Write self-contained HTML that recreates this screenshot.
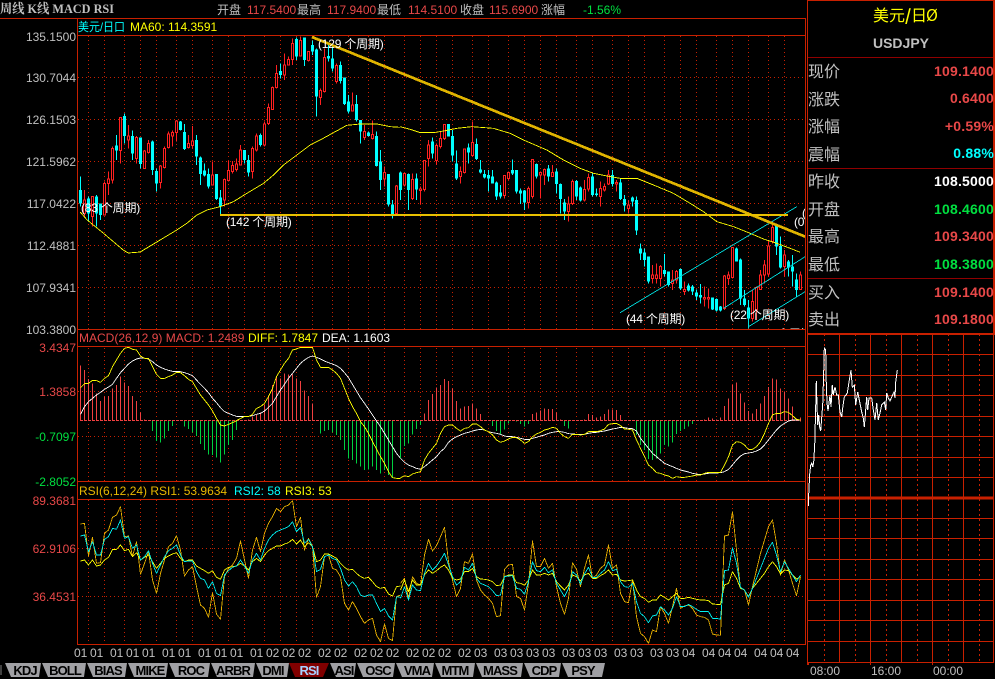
<!DOCTYPE html>
<html><head><meta charset="utf-8"><title>USDJPY</title>
<style>
html,body{margin:0;padding:0;background:#000;overflow:hidden;width:995px;height:679px}
svg{display:block;font-family:"Liberation Sans","WenQuanYi Zen Hei","Noto Sans CJK SC",sans-serif;font-size:12px}
.g{fill:#c0c0c0}.r{fill:#e84848}.n{fill:#00e040}.w{fill:#fff}.y{fill:#ffff00}.c{fill:#00ffff}.o{fill:#e8b800}
.num text,.num{font-weight:bold;font-size:14px;letter-spacing:.2px}
.lab{font-size:16px;fill:#c0c0c0;font-family:"WenQuanYi Zen Hei","Noto Sans CJK SC",sans-serif}
.tab{font-weight:bold;font-size:13px;letter-spacing:-.9px;text-anchor:middle;fill:#000}
.ln{fill:none;stroke-width:2.6;stroke-linejoin:round}
.ann{letter-spacing:-.2px}
</style></head><body>
<svg width="995" height="679" viewBox="0 0 995 679" xmlns="http://www.w3.org/2000/svg">
<rect width="995" height="679" fill="#000"/>

<g shape-rendering="crispEdges">
<!-- grid verticals -->
<path fill="none" stroke="#c82000" stroke-dasharray="1 3" d="M88.5 36V644M104.5 36V644M124.5 36V644M140.5 36V644M156.5 36V644M176.5 36V644M192.5 36V644M212.5 36V644M228.5 36V644M244.5 36V644M264.5 36V644M280.5 36V644M296.5 36V644M312.5 36V644M332.5 36V644M348.5 36V644M368.5 36V644M384.5 36V644M404.5 36V644M420.5 36V644M436.5 36V644M452.5 36V644M472.5 36V644M488.5 36V644M508.5 36V644M524.5 36V644M540.5 36V644M556.5 36V644M576.5 36V644M592.5 36V644M612.5 36V644M628.5 36V644M644.5 36V644M664.5 36V644M680.5 36V644M696.5 36V644M716.5 36V644M732.5 36V644M748.5 36V644M768.5 36V644M784.5 36V644"/>
<!-- grid horizontals -->
<path fill="none" stroke="#c82000" stroke-dasharray="1 3" d="M78 77.5H805M78 119.5H805M78 161.5H805M78 203.5H805M78 245.5H805M78 287.5H805M78 391.5H805M78 436.5H805M78 548.5H805M78 596.5H805"/>

<!-- candles part 1 -->
<g transform="translate(.17 0) scale(.33333)">
<path fill="none" stroke="#00ffff" stroke-width="3" d="M241 530V620M265 590V665M289 585V680M301 610V660M349 405V480M373 340V430M397 392V480M421 412V505M457 422V525M469 505V575M541 363V392M553 372V450M589 405V495M601 470V555M613 490V530M625 505V565M649 522V600M661 570V645M733 450V490M745 465V530M781 400V440M841 190V235M889 112V180M913 112V198M937 122V165M949 145V350M985 130V185M997 130V215M1021 185V250M1033 232V315M1045 285V340M1069 285V365M1081 360V430M1105 395V410M1129 395V500M1141 450V570M1165 522V620M1177 600V655"/>
<path fill="none" stroke="#00ffff" stroke-width="9" d="M241 570V610M265 595V640M289 590V640M301 610V645M349 437V452M373 348V408M397 408V460M421 412V492M457 425V510M469 513V550M541 365V390M553 396V447M589 420V470M601 472V522M613 512V527M625 522V560M649 522V597M661 593V620M733 450V480M745 480V518M781 405V435M841 213V225M889 117V170M913 112V180M937 135V155M949 148V290M985 168V175M997 175V205M1021 195V243M1033 232V312M1045 305V335M1069 312V360M1081 360V395M1105 398V408M1129 408V498M1141 485V540M1165 522V613M1177 613V645"/>
<path fill="none" stroke="#ff2020" stroke-width="3" d="M253 570V650M277 590V680M313 545V645M325 515V585M337 440V550M361 352V490M385 375V445M409 408V490M433 450V505M445 420V460M481 495V565M493 440V505M505 395V445M517 392V440M529 360V425M565 405V445M577 378V445M637 485V555M673 535V620M685 483V545M697 483V520M709 475V515M721 435V495M757 440V535M769 400V455M793 365V440M805 310V375M817 260V330M829 195V265M853 160V240M865 170V195M877 115V195M901 110V170M925 155V185M961 265V315M973 145V278M1009 190V250M1057 278V335M1093 375V420M1117 362V418M1153 500V560M1189 555V640"/>
<path fill="#000" stroke="#ff2020" stroke-width="3" d="M250 600h6V640h-6zM274 590h6V650h-6zM310 550h6V645h-6zM322 537h6V550h-6zM334 445h6V540h-6zM358 352h6V452h-6zM382 408h6V420h-6zM406 413h6V475h-6zM430 453h6V505h-6zM442 430h6V458h-6zM478 498h6V548h-6zM490 445h6V502h-6zM502 402h6V442h-6zM514 397h6V408h-6zM526 363h6V398h-6zM562 430h6V443h-6zM574 423h6V437h-6zM634 525h6V555h-6zM670 538h6V600h-6zM682 512h6V542h-6zM694 497h6V515h-6zM706 492h6V508h-6zM718 450h6V495h-6zM754 445h6V515h-6zM766 408h6V450h-6zM790 372h6V435h-6zM802 322h6V370h-6zM814 262h6V328h-6zM826 220h6V262h-6zM850 195h6V225h-6zM862 178h6V195h-6zM874 130h6V178h-6zM898 122h6V168h-6zM922 155h6V182h-6zM958 272h6V293h-6zM970 172h6V275h-6zM1006 197h6V245h-6zM1054 315h6V333h-6zM1090 395h6V412h-6zM1114 403h6V415h-6zM1150 518h6V537h-6zM1186 558h6V640h-6z"/>
</g>

<!-- candles part 2 -->
<g transform="translate(400.17 0) scale(.33333)">
<path fill="none" stroke="#00ffff" stroke-width="3" d="M1 515V600M25 520V630M49 520V600M97 412V475M145 372V410M157 390V485M169 452V540M205 430V490M229 415V480M241 480V520M253 510V535M265 510V575M277 510V550M289 545V600M301 555V595M337 478V525M349 510V580M361 565V612M373 570V630M409 490V535M445 495V545M469 505V580M481 550V640M493 597V660M529 540V600M541 560V605M577 520V590M589 565V590M637 510V560M661 535V600M673 585V635M697 590V620M709 590V705M721 730V780M733 745V800M745 770V850M793 762V830M805 815V860M841 805V870M865 850V875M877 855V885M889 868V900M901 852V910M937 893V930M949 895V935M961 918V935M1009 742V785M1021 775V915M1033 870V920M1045 900V985M1129 675V765M1141 710V805M1165 780V830M1177 765V860M1189 820V890"/>
<path fill="none" stroke="#00ffff" stroke-width="9" d="M1 517V570M25 522V570M49 535V568M97 425V460M145 372V410M157 408V467M169 490V535M205 443V457M229 432V477M241 508V517M253 522V533M265 525V535M277 530V550M289 547V590M301 578V590M337 510V520M349 510V575M361 572V580M373 572V608M409 492V530M445 505V530M469 515V552M481 552V597M493 607V635M529 543V590M541 562V602M577 530V585M589 580V585M637 525V552M661 548V597M673 597V617M697 592V605M709 600V692M721 745V760M733 757V780M745 770V845M793 810V822M805 815V855M841 807V865M865 857V872M877 860V875M889 877V890M901 885V893M937 893V928M949 897V932M961 920V932M1009 745V785M1021 778V895M1033 895V915M1045 922V955M1129 675V740M1141 738V803M1165 785V803M1177 800V815M1189 838V870"/>
<path fill="none" stroke="#ff2020" stroke-width="3" d="M13 520V560M37 520V600M61 560V612M73 480V575M85 420V500M109 430V495M121 395V445M133 372V420M181 500V550M193 445V520M217 365V470M313 525V595M325 515V540M385 560V625M397 478V595M421 515V595M433 505V555M457 495V530M505 590V665M517 538V615M553 540V605M565 520V575M601 545V620M613 550V575M625 510V555M649 540V575M685 600V640M757 795V850M769 790V850M781 795V860M817 810V870M829 810V850M853 845V885M913 860V920M925 865V925M973 825V930M985 815V855M997 742V835M1057 870V965M1069 860V960M1081 810V868M1093 780V850M1105 720V830M1117 665V730M1153 750V830M1201 815V870"/>
<path fill="#000" stroke="#ff2020" stroke-width="3" d="M10 520h6V555h-6zM34 538h6V595h-6zM58 567h6V572h-6zM70 482h6V568h-6zM82 435h6V475h-6zM106 436h6V482h-6zM118 415h6V440h-6zM130 373h6V415h-6zM178 515h6V530h-6zM190 447h6V517h-6zM214 428h6V467h-6zM310 527h6V587h-6zM322 518h6V535h-6zM382 565h6V607h-6zM394 478h6V590h-6zM418 518h6V525h-6zM430 508h6V525h-6zM454 517h6V530h-6zM502 612h6V635h-6zM514 545h6V610h-6zM550 568h6V600h-6zM562 533h6V567h-6zM598 565h6V590h-6zM610 560h6V570h-6zM622 525h6V552h-6zM646 548h6V552h-6zM682 615h6V625h-6zM754 825h6V835h-6zM766 825h6V835h-6zM778 800h6V835h-6zM814 840h6V850h-6zM826 815h6V840h-6zM850 868h6V875h-6zM910 892h6V897h-6zM922 892h6V897h-6zM970 828h6V925h-6zM982 825h6V835h-6zM994 743h6V832h-6zM1054 905h6V955h-6zM1066 862h6V930h-6zM1078 825h6V868h-6zM1090 795h6V825h-6zM1102 738h6V822h-6zM1114 683h6V725h-6zM1150 765h6V800h-6zM1198 825h6V868h-6z"/>
</g>

<!-- MA60 -->
<g transform="translate(.17 0) scale(.33333)">
<polyline class="ln" stroke="#ffff00" points="240 636 261 660 309 699 369 750 384 759 420 756 480 720 530 690 560 670 590 645 620 630 660 620 700 605 740 580 790 550 820 525 850 495 890 465 930 435 960 420 1000 398 1040 376 1080 372 1130 372 1170 380 1200 382"/>
</g>
<g transform="translate(400.17 0) scale(.33333)">
<polyline class="ln" stroke="#ffff00" points="0 380 30 388 60 398 100 398 130 393 170 385 215 380 280 385 330 400 370 420 440 450 490 480 540 505 580 520 620 528 660 535 710 535 760 555 820 580 870 610 910 635 950 665 1000 680 1050 700 1090 717 1130 730 1170 745 1200 757"/>
<!-- channel lines -->
<path fill="none" stroke="#00e0e0" stroke-width="2.6" d="M660 938L1190 620M970 925L1215 770M1045 980L1215 875M1045 930V985"/>
</g>
<!-- gold trend lines -->
<path fill="none" stroke="#e0b400" stroke-width="2.7" d="M312 37L806 237"/>
<path fill="none" stroke="#e8c000" stroke-width="2" shape-rendering="crispEdges" d="M220 215H788"/>

<!-- MACD bars -->
<g transform="translate(.17 325) scale(.33333)" fill="none" stroke-width="3">
<path stroke="#f04040" d="M241 287V122M253 287V135M265 287V162M277 287V175M289 287V205M301 287V228M313 287V215M325 287V213M337 287V190M349 287V180M361 287V155M373 287V172M385 287V183M397 287V213M409 287V228M421 287V262M433 287V283M445 287V285M733 287V285M745 287V283M757 287V275M769 287V270M781 287V262M793 287V240M805 287V212M817 287V180M829 287V158M841 287V160M853 287V145M865 287V148M877 287V148M889 287V160M901 287V168M913 287V197M925 287V213M937 287V235"/>
<path stroke="#00d040" d="M457 287V318M469 287V348M481 287V353M493 287V340M505 287V318M517 287V303M553 287V305M565 287V312M577 287V322M589 287V333M601 287V357M613 287V375M625 287V388M637 287V390M649 287V397M661 287V412M673 287V388M685 287V360M697 287V345M709 287V315M961 287V325M973 287V318M985 287V315M997 287V322M1009 287V330M1021 287V345M1033 287V375M1045 287V400M1057 287V405M1069 287V415M1081 287V425M1093 287V435M1105 287V433M1117 287V425M1129 287V435M1141 287V445M1153 287V435M1165 287V450M1177 287V458"/>
<path stroke="#f04040" d="M240 287H1200" stroke-dasharray="9 3"/>
<polyline class="ln" stroke="#fff" points="241 268 253 245 265 230 277 220 289 210 301 202 313 193 325 186 337 178 349 160 361 143 373 130 385 117 397 108 409 102 421 99 433 100 445 102 457 110 469 120 481 127 493 132 505 136 517 139 529 139 541 140 553 143 565 147 577 152 589 165 601 178 613 190 625 203 637 220 649 233 661 248 673 260 685 265 697 270 709 274 721 274 733 274 745 274 757 272 769 268 781 265 793 258 805 247 817 235 829 215 841 195 853 178 865 160 877 145 889 130 901 115 913 105 925 97 937 93 949 97 961 102 973 108 985 113 997 117 1009 122 1021 130 1033 143 1045 158 1057 178 1069 198 1081 218 1093 235 1105 252 1117 270 1129 288 1141 305 1153 325 1165 345 1177 365 1189 385 1201 400"/>
<polyline class="ln" stroke="#ffff00" points="241 188 253 176 265 175 277 166 289 167 301 172 313 160 325 152 337 125 349 105 361 85 373 70 385 67 397 73 409 75 421 93 433 100 445 100 457 125 469 148 481 160 493 160 505 155 517 150 529 142 541 143 553 152 565 163 577 170 589 190 601 210 613 225 625 240 637 258 649 280 661 300 673 303 685 298 697 293 709 287 721 280 733 275 745 275 757 268 769 250 781 245 793 235 805 215 817 190 829 155 841 135 853 115 865 100 877 75 889 72 901 67 913 67 925 67 937 67 949 105 961 127 973 127 985 127 997 135 1009 145 1021 160 1033 190 1045 220 1057 245 1069 265 1081 290 1093 305 1105 325 1117 350 1129 372 1141 395 1153 415 1165 440 1177 458 1189 460 1201 460"/>
</g>
<g transform="translate(400.17 325) scale(.33333)" fill="none" stroke-width="3">
<path stroke="#00d040" d="M1 287V400M13 287V363M25 287V355M37 287V328M49 287V312M61 287V300M277 287V303M289 287V318M301 287V328M313 287V313M325 287V295M349 287V290M361 287V297M373 287V305M385 287V297M493 287V303M505 287V310M709 287V330M721 287V360M733 287V375M745 287V402M757 287V405M769 287V400M781 287V385M793 287V360M805 287V365M817 287V352M829 287V327M841 287V318M853 287V312M865 287V305M877 287V297"/>
<path stroke="#f04040" d="M73 287V265M85 287V225M97 287V207M109 287V188M121 287V180M133 287V162M145 287V168M157 287V190M169 287V228M181 287V250M193 287V245M205 287V243M217 287V235M229 287V250M241 287V267M253 287V285M397 287V267M409 287V262M421 287V257M433 287V250M445 287V252M457 287V252M469 287V262M481 287V283M553 287V283M565 287V267M577 287V270M589 287V277M601 287V275M613 287V267M625 287V253M637 287V253M649 287V255M661 287V270M913 287V283M925 287V277M937 287V281M949 287V283M961 287V277M973 287V243M985 287V220M997 287V180M1009 287V172M1021 287V205M1033 287V232M1045 287V258M1057 287V265M1069 287V252M1081 287V235M1093 287V213M1105 287V186M1117 287V160M1129 287V163M1141 287V190M1153 287V200M1165 287V220M1177 287V245M1189 287V280M1201 278V290"/>
<path stroke="#f04040" d="M0 287H1200" stroke-dasharray="9 3"/>
<polyline class="ln" stroke="#fff" points="1 400 13 412 25 420 37 425 49 430 61 433 73 425 85 415 97 405 109 395 121 380 133 370 145 352 157 342 169 335 181 330 193 325 205 322 217 318 229 315 241 313 253 315 265 320 277 323 289 325 301 328 313 333 325 335 337 335 349 337 361 340 373 343 385 344 397 340 409 337 421 333 433 330 445 325 457 322 469 320 481 320 493 322 505 326 517 327 529 328 541 328 553 328 565 325 577 323 589 322 601 320 613 318 625 315 637 312 649 310 661 307 673 308 685 310 697 311 709 318 721 340 733 355 745 370 757 385 769 395 781 405 793 415 805 420 817 425 829 430 841 435 853 438 865 441 877 445 889 447 901 449 913 447 925 445 937 444 949 444 961 443 973 440 985 433 997 420 1009 405 1021 393 1033 386 1045 384 1057 382 1069 378 1081 372 1093 360 1105 345 1117 330 1129 315 1141 303 1153 295 1165 288 1177 285 1189 285 1201 285"/>
<polyline class="ln" stroke="#ffff00" points="1 458 13 452 25 455 37 447 49 443 61 440 73 405 85 385 97 370 109 355 121 325 133 305 145 300 157 300 169 310 181 318 193 310 205 308 217 297 229 297 241 305 253 315 265 320 277 330 289 345 301 352 313 348 325 342 337 337 349 338 361 345 373 355 385 350 397 335 409 327 421 322 433 315 445 312 457 307 469 310 481 325 493 335 505 340 517 328 529 328 541 330 553 328 565 320 577 320 589 320 601 317 613 312 625 298 637 296 649 295 661 302 673 312 685 313 697 315 709 345 721 370 733 395 745 420 757 430 769 443 781 445 793 450 805 453 817 460 829 455 841 457 853 457 865 455 877 453 889 450 901 450 913 445 925 442 937 443 949 443 961 442 973 420 985 395 997 360 1009 350 1021 352 1033 360 1045 373 1057 373 1069 365 1081 350 1093 325 1105 295 1117 270 1129 265 1141 265 1153 260 1165 262 1177 272 1189 283 1201 285"/>
</g>

<!-- RSI -->
<g transform="translate(.17 480) scale(.33333)">
<polyline class="ln" stroke="#e8b000" points="241 132 253 130 265 228 277 172 289 250 301 248 313 160 325 150 337 112 349 105 361 80 373 170 385 168 397 230 409 185 421 283 433 250 445 215 457 300 469 340 481 280 493 240 505 200 517 190 529 167 541 210 553 288 565 270 577 260 589 320 601 375 613 385 625 412 637 338 649 402 661 418 673 290 685 265 697 255 709 235 721 183 733 240 745 295 757 210 769 172 781 215 793 160 805 130 817 110 829 85 841 95 853 80 865 75 877 62 889 140 901 112 913 210 925 175 937 200 949 352 961 320 973 230 985 225 997 265 1009 270 1021 290 1033 370 1045 390 1057 365 1069 385 1081 410 1093 430 1105 420 1117 415 1129 465 1141 485 1153 432 1165 475 1177 482 1189 350 1201 345"/>
<polyline class="ln" stroke="#ffff00" points="241 243 253 240 265 255 277 240 289 258 301 255 313 240 325 232 337 208 349 208 361 195 373 212 385 208 397 230 409 218 421 240 433 232 445 225 457 245 469 265 481 250 493 235 505 228 517 222 529 218 541 235 553 245 565 240 577 240 589 258 601 265 613 272 625 280 637 272 649 292 661 298 673 270 685 262 697 260 709 258 721 250 733 258 745 270 757 245 769 235 781 245 793 225 805 212 817 205 829 198 841 198 853 192 865 188 877 178 889 192 901 180 913 200 925 188 937 200 949 245 961 240 973 222 985 222 997 228 1009 235 1021 250 1033 262 1045 270 1057 268 1069 280 1081 290 1093 295 1105 292 1117 305 1129 320 1141 325 1153 322 1165 342 1177 348 1189 320 1201 318"/>
<polyline class="ln" stroke="#00f0f0" points="241 168 253 165 265 215 277 185 289 225 301 225 313 178 325 170 337 145 349 148 361 120 373 175 385 170 397 205 409 195 421 240 433 230 445 212 457 250 469 280 481 255 493 230 505 212 517 205 529 195 541 225 553 245 565 243 577 243 589 275 601 295 613 300 625 325 637 305 649 340 661 347 673 285 685 272 697 262 709 258 721 240 733 258 745 280 757 240 769 220 781 240 793 205 805 180 817 165 829 155 841 150 853 145 865 140 877 125 889 155 901 142 913 190 925 178 937 200 949 275 961 268 973 230 985 225 997 235 1009 240 1021 265 1033 300 1045 318 1057 305 1069 320 1081 345 1093 350 1105 345 1117 345 1129 370 1141 395 1153 385 1165 408 1177 420 1189 350 1201 352"/>
</g>
<g transform="translate(400.17 480) scale(.33333)">
<polyline class="ln" stroke="#e8b000" points="1 310 13 295 25 355 37 290 49 310 61 315 73 225 85 178 97 213 109 197 121 170 133 142 145 245 157 300 169 350 181 325 193 245 205 250 217 222 229 300 241 330 253 345 265 355 277 370 289 410 301 407 313 268 325 255 337 253 349 350 361 355 373 390 385 310 397 183 409 260 421 260 433 235 445 265 457 250 469 320 481 370 493 403 505 355 517 248 529 268 541 320 553 265 565 225 577 295 589 285 601 265 613 255 625 195 637 265 649 255 661 340 673 365 685 368 697 300 709 410 721 460 733 470 745 490 757 450 769 455 781 380 793 400 805 430 817 380 829 325 841 385 853 378 865 375 877 385 889 405 901 410 913 412 925 420 937 462 949 465 961 466 973 168 985 165 997 95 1009 210 1021 325 1033 330 1045 375 1057 320 1069 270 1081 220 1093 180 1105 140 1117 120 1129 190 1141 285 1153 240 1165 270 1177 310 1189 347 1201 290"/>
<polyline class="ln" stroke="#ffff00" points="1 330 13 300 25 335 37 300 49 315 61 315 73 285 85 270 97 280 109 272 121 262 133 255 145 270 157 295 169 300 181 297 193 275 205 275 217 265 229 290 241 297 253 298 265 300 277 305 289 317 301 315 313 290 325 285 337 285 349 308 361 310 373 316 385 300 397 270 409 285 421 285 433 280 445 285 457 280 469 305 481 318 493 330 505 315 517 285 529 290 541 303 553 285 565 280 577 295 589 295 601 287 613 280 625 270 637 285 649 283 661 300 673 303 685 302 697 300 709 330 721 350 733 355 745 367 757 360 769 360 781 345 793 352 805 360 817 350 829 340 841 355 853 355 865 352 877 355 889 358 901 360 913 360 925 362 937 372 949 373 961 373 973 315 985 310 997 275 1009 295 1021 325 1033 330 1045 350 1057 325 1069 310 1081 295 1093 280 1105 260 1117 245 1129 260 1141 282 1153 270 1165 272 1177 285 1189 297 1201 290"/>
<polyline class="ln" stroke="#00f0f0" points="1 355 13 320 25 360 37 315 49 330 61 332 73 280 85 250 97 270 109 258 121 240 133 220 145 255 157 290 169 315 181 305 193 262 205 270 217 250 229 295 241 310 253 315 265 320 277 332 289 347 301 345 313 290 325 288 337 287 349 325 361 328 373 343 385 305 397 245 409 272 421 275 433 262 445 278 457 270 469 310 481 330 493 350 505 325 517 275 529 285 541 312 553 282 565 262 577 292 589 292 601 280 613 270 625 245 637 272 649 268 661 305 673 320 685 322 697 310 709 365 721 400 733 410 745 428 757 408 769 405 781 380 793 390 805 405 817 385 829 350 841 380 853 380 865 373 877 380 889 388 901 395 913 395 925 395 937 415 949 415 961 418 973 272 985 270 997 203 1009 250 1021 322 1033 330 1045 352 1057 325 1069 295 1081 265 1093 235 1105 205 1117 187 1129 225 1141 275 1153 245 1165 265 1177 285 1189 305 1201 285"/>
</g>
</g>

<!-- annotations -->
<g class="w ann">
<text x="81" y="212">(83 个周期)</text>
<text x="226" y="226">(142 个周期)</text>
<text x="318" y="48">(129 个周期)</text>
<text x="626" y="323">(44 个周期)</text>
<text x="730" y="319">(22 个周期)</text>
<text x="794" y="226">(0 个周期)</text>
<text x="802" y="217">(</text>
<text x="777" y="338">个周期</text>
</g>

<!-- header bands / cover -->
<g shape-rendering="crispEdges">
<rect x="78" y="330" width="727" height="16" fill="#000"/>
<rect x="78" y="482" width="727" height="17" fill="#000"/>
<rect x="805" y="0" width="190" height="679" fill="#000"/>
<rect x="78" y="19" width="727" height="16" fill="#000"/>
<path fill="none" stroke="#c82000" d="M0 18.5H805.5M78 35.5H805.5M78 329.5H805.5M78 346.5H805.5M78 481.5H805.5M78 499.5H805.5M78 644.5H805.5M77.5 18V645M805.5 18V645"/>
</g>

<!-- top bar -->
<text x="0" y="13" textLength="114" lengthAdjust="spacingAndGlyphs" style="font:bold 13px 'Liberation Serif','Noto Serif CJK SC',serif" class="g">周线 K线 MACD RSI</text>
<text x="217" y="14" class="g">开盘</text><text x="247" y="14" class="r">117.5400</text>
<text x="297" y="14" class="g">最高</text><text x="327" y="14" class="r">117.9400</text>
<text x="377" y="14" class="g">最低</text><text x="408" y="14" class="r">114.5100</text>
<text x="460" y="14" class="g">收盘</text><text x="489" y="14" class="r">115.6900</text>
<text x="541" y="14" class="g">涨幅</text><text x="583" y="14" class="n">-1.56%</text>

<!-- panel headers -->
<text x="78" y="31" class="c" textLength="47" lengthAdjust="spacingAndGlyphs">美元/日口</text><text x="130" y="31" class="y">MA60: 114.3591</text>
<text x="79" y="342" class="r">MACD(26,12,9) MACD: 1.2489</text><text x="248" y="342" class="y">DIFF: 1.7847</text><text x="322" y="342" class="w">DEA: 1.1603</text>
<text x="79" y="495" class="o">RSI(6,12,24) RSI1: 53.9634</text><text x="234" y="495" class="c">RSI2: 58</text><text x="285" y="495" class="y">RSI3: 53</text>

<!-- y axis -->
<g text-anchor="end">
<g class="g"><text x="76" y="41">135.1500</text><text x="76" y="82">130.7044</text><text x="76" y="124">126.1503</text><text x="76" y="166">121.5962</text><text x="76" y="208">117.0422</text><text x="76" y="250">112.4881</text><text x="76" y="292">107.9341</text><text x="76" y="334">103.3800</text></g>
<g class="r"><text x="76" y="352">3.4347</text><text x="76" y="396">1.3858</text><text x="76" y="505">89.3681</text><text x="76" y="553">62.9106</text><text x="76" y="601">36.4531</text></g>
<g class="n"><text x="76" y="441">-0.7097</text><text x="76" y="486">-2.8052</text></g>
</g>

<!-- x axis -->
<g class="g">
<text x="74" y="657">01</text><text x="90" y="657">01</text><text x="110" y="657">01</text><text x="126" y="657">01</text><text x="142" y="657">01</text><text x="162" y="657">01</text><text x="178" y="657">01</text><text x="198" y="657">01</text><text x="214" y="657">01</text><text x="230" y="657">01</text><text x="250" y="657">01</text><text x="266" y="657">02</text><text x="282" y="657">02</text><text x="298" y="657">02</text><text x="318" y="657">02</text><text x="334" y="657">02</text><text x="354" y="657">02</text><text x="370" y="657">02</text><text x="386" y="657">02</text>
<text x="406" y="657">02</text><text x="422" y="657">02</text><text x="438" y="657">02</text><text x="458" y="657">02</text><text x="474" y="657">03</text><text x="494" y="657">03</text><text x="510" y="657">03</text><text x="526" y="657">03</text><text x="542" y="657">03</text><text x="562" y="657">03</text><text x="578" y="657">03</text><text x="594" y="657">03</text><text x="614" y="657">03</text><text x="630" y="657">03</text><text x="650" y="657">03</text><text x="666" y="657">03</text><text x="682" y="657">04</text><text x="702" y="657">04</text><text x="718" y="657">04</text><text x="734" y="657">04</text><text x="754" y="657">04</text><text x="770" y="657">04</text><text x="786" y="657">04</text>
</g>

<!-- tabs -->
<path d="M1 665v10" stroke="#808080" shape-rendering="crispEdges"/>
<g fill="#a0a0a4">
<polygon points="5,663 41,663 39,677 11,677"/>
<polygon points="42,663 86,663 84,677 48,677"/>
<polygon points="87,663 127,663 125,677 93,677"/>
<polygon points="128,663 168,663 166,677 134,677"/>
<polygon points="169,663 210,663 208,677 175,677"/>
<polygon points="211,663 255,663 253,677 217,677"/>
<polygon points="256,663 289,663 287,677 262,677"/>
<polygon points="330,663 356,663 354,677 336,677"/>
<polygon points="357,663 395,663 393,677 363,677"/>
<polygon points="396,663 434,663 432,677 402,677"/>
<polygon points="435,663 475,663 473,677 441,677"/>
<polygon points="476,663 523,663 521,677 482,677"/>
<polygon points="524,663 561,663 559,677 530,677"/>
<polygon points="562,663 605,663 602,677 568,677"/>
</g>
<polygon points="289,663 329,663 323,677 295,677" fill="#800000"/>
<g class="tab">
<text x="25" y="675">KDJ</text><text x="65" y="675">BOLL</text><text x="108" y="675">BIAS</text><text x="150" y="675">MIKE</text><text x="191" y="675">ROC</text><text x="233" y="675">ARBR</text><text x="273" y="675">DMI</text><text x="309" y="675" style="fill:#a8d0ff">RSI</text><text x="344" y="675">ASI</text><text x="378" y="675">OSC</text><text x="417" y="675">VMA</text><text x="455" y="675">MTM</text><text x="500" y="675">MASS</text><text x="544" y="675">CDP</text><text x="583" y="675">PSY</text>
</g>

<!-- right panel -->
<g shape-rendering="crispEdges" fill="none">
<path stroke="#c82000" d="M807.5 0V665M993.5 0V662M807 .5H995"/>
<path stroke="#900000" d="M808 57.5H993M808 168.5H993M808 278.5H993"/>
<path stroke="#c82000" stroke-width="2" d="M807 334H995M994 0V334"/>
<path stroke="#c82000" d="M839.5 334V662M870.5 334V665M901.5 334V662M932.5 334V665M963.5 334V662M808.5 662V665M808 354.5H994M808 375.5H994M808 395.5H994M808 416.5H994M808 436.5H994M808 457.5H994M808 477.5H994M808 518.5H994M808 538.5H994M808 559.5H994M808 579.5H994M808 600.5H994M808 620.5H994M808 641.5H994M808 662.5H994"/>
<path stroke="#c82000" stroke-width="3" d="M808 498H994"/>
<path stroke="#c82000" stroke-dasharray="2 3" d="M824.5 334V662M855.5 334V662M886.5 334V662M917.5 334V662M948.5 334V662M979.5 334V662"/>
</g>
<polyline fill="none" stroke="#fff" shape-rendering="crispEdges" points="808.3,506 808.7,494 809.7,474 810.7,465 811.7,463 812.7,467 813.7,462 814.7,445 815.7,407 816.3,381 817,405 817.7,425 818.7,415 819.7,427 820.7,431 821.7,418 822.7,405 823.7,372 824.3,348 825.7,350 826,375 827,403 828,411 829,403 830,395 831,407 832.3,385 833.3,395 835,387 836.7,395 838.3,395 840,412 841.7,417 842.7,408 844.3,397 846,395 847.3,393 849.3,380 851,370 852.3,387 854.3,385 855.7,405 857.7,392 859.3,400 861.7,412 863.3,418 864.3,427 865.7,410 866.7,397 867.7,410 869,398 871.7,398 873.3,410 875,420 876.7,403 878.3,420 880,413 881.7,405 884.3,402 885.7,410 886.7,393 888.3,398 890,401 891.7,397 894,392 895,398 895.7,382 897.3,370"/>
<g font-family="'WenQuanYi Zen Hei','Noto Sans CJK SC',sans-serif" font-size="16" fill="#ffff00">
<text x="873" y="21">美</text><text x="889" y="21">元</text><text x="905" y="21" font-weight="bold">/</text><text x="911" y="21">日</text><text x="926" y="21">Ø</text>
</g>
<text x="901" y="48" text-anchor="middle" style="font-weight:bold;font-size:14px" class="g">USDJPY</text>
<g class="lab">
<text x="808" y="77">现价</text><text x="808" y="105">涨跌</text><text x="808" y="132">涨幅</text><text x="808" y="160">震幅</text><text x="808" y="187">昨收</text><text x="808" y="215">开盘</text><text x="808" y="242">最高</text><text x="808" y="270">最低</text><text x="808" y="298">买入</text><text x="808" y="325">卖出</text>
</g>
<g class="num" text-anchor="end">
<text x="994" y="76" class="r">109.1400</text><text x="994" y="103" class="r">0.6400</text><text x="994" y="131" class="r">+0.59%</text><text x="994" y="158" class="c">0.88%</text><text x="994" y="186" class="w">108.5000</text><text x="994" y="214" class="n">108.4600</text><text x="994" y="241" class="r">109.3400</text><text x="994" y="269" class="n">108.3800</text><text x="994" y="297" class="r">109.1400</text><text x="994" y="324" class="r">109.1800</text>
</g>
<g class="g"><text x="810" y="675">08:00</text><text x="871" y="675">16:00</text><text x="933" y="675">00:00</text></g>
</svg>
</body></html>
